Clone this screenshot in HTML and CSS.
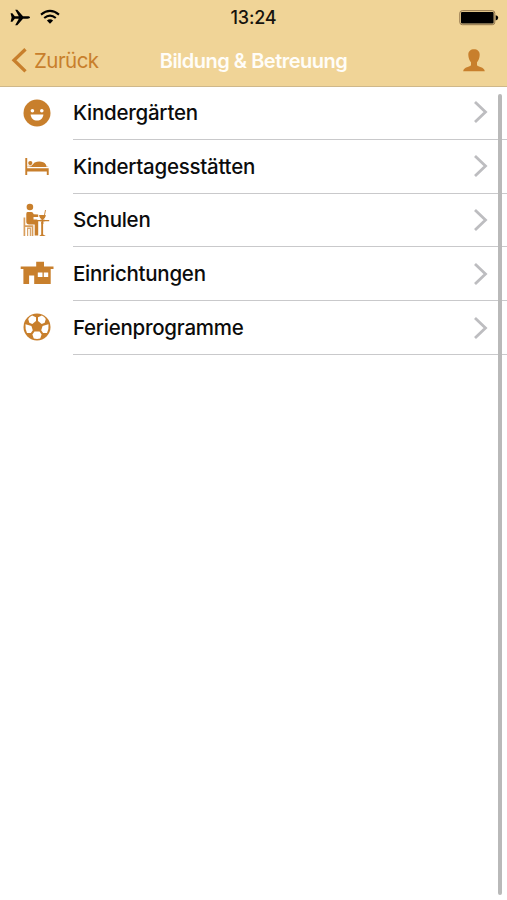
FILE: index.html
```html
<!DOCTYPE html>
<html lang="de">
<head>
<meta charset="utf-8">
<title>Bildung &amp; Betreuung</title>
<link rel="stylesheet" href="styles.css">
</head>
<body>
<div class="screen">
  <header class="header">
    <div class="status">
      <div class="signals">
        <svg width="20" height="17" viewBox="0 0 20 20" preserveAspectRatio="none"><path d="M0.6 4.9H2.4L4.8 8.6H8.8L5.2 0.8H7.3L13 8.6H17.5C19 8.6 20 9.2 20 10S19 11.4 17.5 11.4H13L7.3 19.2H5.2L8.8 11.4H4.8L2.4 15.1H0.6L1.6 10Z"/></svg>
        <svg width="20" height="16" viewBox="0 0 20 16"><g fill="none" stroke="#000" stroke-width="2.1"><path d="M1 5.6Q10-1.7 19 5.6"/><path d="M4.2 9Q10 4.1 15.8 9"/></g><path d="M10 14.8L6.9 11.5Q10 8.8 13.1 11.5Z"/></svg>
      </div>
      <span class="time">13:24</span>
      <svg class="battery" width="40" height="18" viewBox="0 0 40 18"><rect x=".8" y="1.7" width="35" height="14" rx="2.5" fill="none" stroke="#8e734b" stroke-width="1"/><rect x="2" y="2.9" width="32.6" height="11.6" rx="1"/><path d="M36.7 6.2Q39.2 6.6 39.2 8.8T36.7 11.4Z"/></svg>
    </div>
    <nav class="nav">
      <a class="back"><svg width="17" height="27" viewBox="0 0 17 27"><path d="M14.5 2.2L3 13.3L14.5 24.4" fill="none" stroke="#c87f2c" stroke-width="3.3"/></svg><span>Zurück</span></a>
      <h1 class="title">Bildung &amp; Betreuung</h1>
      <svg class="profile" width="22" height="23" viewBox="0 0 22 23"><path d="M11 .3C14.3.3 16.7 2.2 16.7 5.7C16.7 9 15.3 11.7 14 13.3V16.2C14.7 18 21.4 17.6 21.8 22.3H.2C.6 17.6 7.3 18 8 16.2V13.3C6.7 11.7 5.3 9 5.3 5.7C5.3 2.2 7.7.3 11 .3Z"/></svg>
    </nav>
  </header>
  <ul class="list">
    <li class="row">
      <svg class="icon" viewBox="0 0 36 36"><circle cx="18" cy="18" r="13.5"/><g fill="#fff"><circle cx="13.4" cy="15.8" r="1.8"/><circle cx="22.8" cy="15.8" r="1.8"/><path d="M11.6 19.4H24.4C24 23.3 21.4 25.5 18 25.5S12 23.3 11.6 19.4Z"/></g></svg>
      <div class="cell"><span>Kindergärten</span><svg class="chevron" viewBox="0 0 15 24"><path d="M2 2L12.5 12L2 22"/></svg></div>
    </li>
    <li class="row">
      <svg class="icon" viewBox="0 0 36 36"><path d="M6.3 10H8.2V20.2H29.7V27H27.8V23.4H8.2V27H6.3Z"/><circle cx="11.3" cy="15.1" r="2.1"/><path d="M8.8 17.8H12.5L15.6 14.6Q20 12.5 24.2 14.3Q27.5 15.8 27.5 18.9H13Z"/><path d="M8.2 18.1H29.2V19H8.2Z" opacity=".35"/></svg>
      <div class="cell"><span>Kindertagesstätten</span><svg class="chevron" viewBox="0 0 15 24"><path d="M2 2L12.5 12L2 22"/></svg></div>
    </li>
    <li class="row">
      <svg class="icon" viewBox="0 0 36 36"><circle cx="10.9" cy="5" r="3.3"/><path d="M8.5 10H12.3Q14 10 14.7 12.2L19.2 12.6V14.9H14.5V17.5H17.7Q19.2 17.5 19.2 19V33.5H15.7V22.5H10.2Q7.3 22.5 7.3 19.8V12Q7.3 10 8.5 10Z"/><path d="M5.4 15.5V34M5 24.2H13.5V34" fill="none" stroke="#d99e5c" stroke-width="1.7"/><path d="M8 25.5H12V34H10.8V27H9.2V34H8Z" opacity=".7"/><path d="M16.6 17.9H30.2V19.2H16.6ZM22.2 20H24.1V32.6L26.8 34H20.2L22.2 32.6Z"/><path d="M20.1 13.1H26.8Q26.4 17 23.5 17.4Q20.5 17 20.1 13.1ZM22.5 16.8H24.4V22H22.5ZM26 8L25.1 13.1H26L26.9 8ZM21.2 17.7H26V19.3H21.2Z"/></svg>
      <div class="cell"><span>Schulen</span><svg class="chevron" viewBox="0 0 15 24"><path d="M2 2L12.5 12L2 22"/></svg></div>
    </li>
    <li class="row">
      <svg class="icon" viewBox="0 0 36 36"><path d="M17.2 6.8H25V11.6H34.5V14.1H31.7V29H15.2V20.5H10.1V29H4.4V14.1H1.7V11.6H17.2Z"/><path d="M18.8 17.5H23.5V22H18.8ZM24.8 17.5H29.2V22H24.8Z" fill="#fff"/></svg>
      <div class="cell"><span>Einrichtungen</span><svg class="chevron" viewBox="0 0 15 24"><path d="M2 2L12.5 12L2 22"/></svg></div>
    </li>
    <li class="row">
      <svg class="icon" viewBox="0 0 36 36"><circle cx="18" cy="18" r="13.5"/><g fill="#fff"><path d="M13.1 6.6Q10.4 8.1 9.2 9.9L10.3 13.8L13.3 15L17 12V8.3Z"/><path d="M22.9 6.6Q25.6 8.1 26.8 9.9L25.7 13.8L22.7 15L19 12V8.3Z"/><path d="M6.5 15.3L9.1 15.9L12.4 17.1L13.8 21.3L11.9 24H8Q6 20.6 6.5 15.3Z"/><path d="M29.5 15.3L26.9 15.9L23.6 17.1L22.2 21.3L24.1 24H28Q30 20.6 29.5 15.3Z"/><path d="M15.5 22.6H20.5L22.6 25.5L21.2 29.5Q18 30.3 14.8 29.5L13.4 25.5Z"/></g></svg>
      <div class="cell"><span>Ferienprogramme</span><svg class="chevron" viewBox="0 0 15 24"><path d="M2 2L12.5 12L2 22"/></svg></div>
    </li>
  </ul>
  <div class="scrollbar"></div>
</div>
</body>
</html>
```
FILE: styles.css
```css
* { box-sizing: border-box; }
body { margin: 0; background: #fff; font-family: Inter, "Liberation Sans", sans-serif; }
.screen { position: relative; height: 900px; overflow: hidden; }
.header { height: 87px; background: #f0d497; border-bottom: 1px solid #cfb88a; }
.status { display: grid; grid-template-columns: 1fr auto 1fr; align-items: center; height: 35px; padding: 0 8px 0 10px; }
.signals { display: flex; align-items: center; gap: 10px; margin-top: -1px; }
.time { font-size: 18px; font-weight: 500; letter-spacing: -0.2px; margin-right: 2px; color: #17130d; }
.battery { justify-self: end; }
.nav { display: grid; grid-template-columns: 1fr auto 1fr; align-items: center; height: 51px; padding: 0 11px; }
.back { display: flex; align-items: center; gap: 6px; color: #c87f2c; font-size: 20.5px; letter-spacing: -0.55px; }
.title { margin: 0; font-size: 20px; font-weight: 600; letter-spacing: -0.5px; color: #fffdf8; }
.profile { justify-self: end; margin-right: 11px; fill: #c87f2c; }
.list { list-style: none; margin: 0; padding: 0; }
.row { display: flex; height: 53.8px; }
.row:first-child { height: 52.8px; }
.icon { width: 36px; height: 36px; margin: 8px 18px 0 19px; flex: none; fill: #c87f2c; }
.cell { display: flex; flex: 1; align-items: center; justify-content: space-between; padding: 0 19px 0 0; border-bottom: 1.5px solid #c9c9cb; font-size: 20.5px; font-weight: 500; letter-spacing: -0.26px; color: #0c0c0c; }
.row:first-child .cell { padding-bottom: 1px; }
.chevron { width: 15px; height: 24px; fill: none; stroke: #bdbdc0; stroke-width: 2.8; }
.scrollbar { position: absolute; top: 94px; right: 5px; width: 4px; height: 801px; border-radius: 2px; background: #b9b9b9; }
```
